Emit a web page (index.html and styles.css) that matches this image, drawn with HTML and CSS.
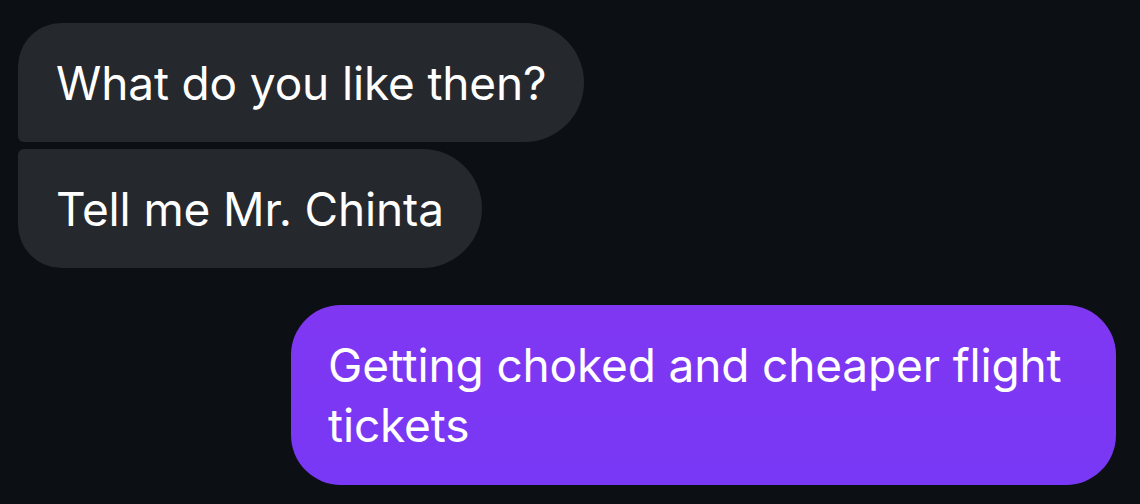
FILE: index.html
```html
<!DOCTYPE html>
<html lang="en">
<head>
    <meta charset="UTF-8">
    <title>Chat</title>
    <link rel="stylesheet" href="styles.css">
</head>
<body>
    <div class="thread">
        <div class="group received">
            <div class="bubble first">What do you like then?</div>
            <div class="bubble last">Tell me Mr. Chinta</div>
        </div>
        <div class="group sent">
            <div class="bubble">Getting choked and cheaper flight tickets</div>
        </div>
    </div>
</body>
</html>
```

FILE: styles.css
```css
body {
    margin: 0;
    background-color: #0c1014;
    font-family: Inter, "Noto Sans", sans-serif;
    color: #ffffff;
}
.thread {
    display: flex;
    flex-direction: column;
    gap: 37px;
    padding: 23px 24px 0 18px;
}
.group {
    display: flex;
    flex-direction: column;
    gap: 7px;
}
.received {
    align-items: flex-start;
}
.sent {
    align-items: flex-end;
}
.bubble {
    font-size: 46px;
    letter-spacing: -0.15px;
    line-height: 60px;
    padding: 30px 38px 29px 38px;
}
.received .bubble {
    background-color: #25282d;
    border-radius: 60px;
}
.received .first {
    border-radius: 44px 60px 60px 6px;
}
.received .last {
    border-radius: 6px 60px 60px 44px;
}
.sent .bubble {
    max-width: 751px;
    background: linear-gradient(#8037f2, #7838f5);
    border-radius: 50px;
    padding: 30px 37px 30px 37px;
}
```
